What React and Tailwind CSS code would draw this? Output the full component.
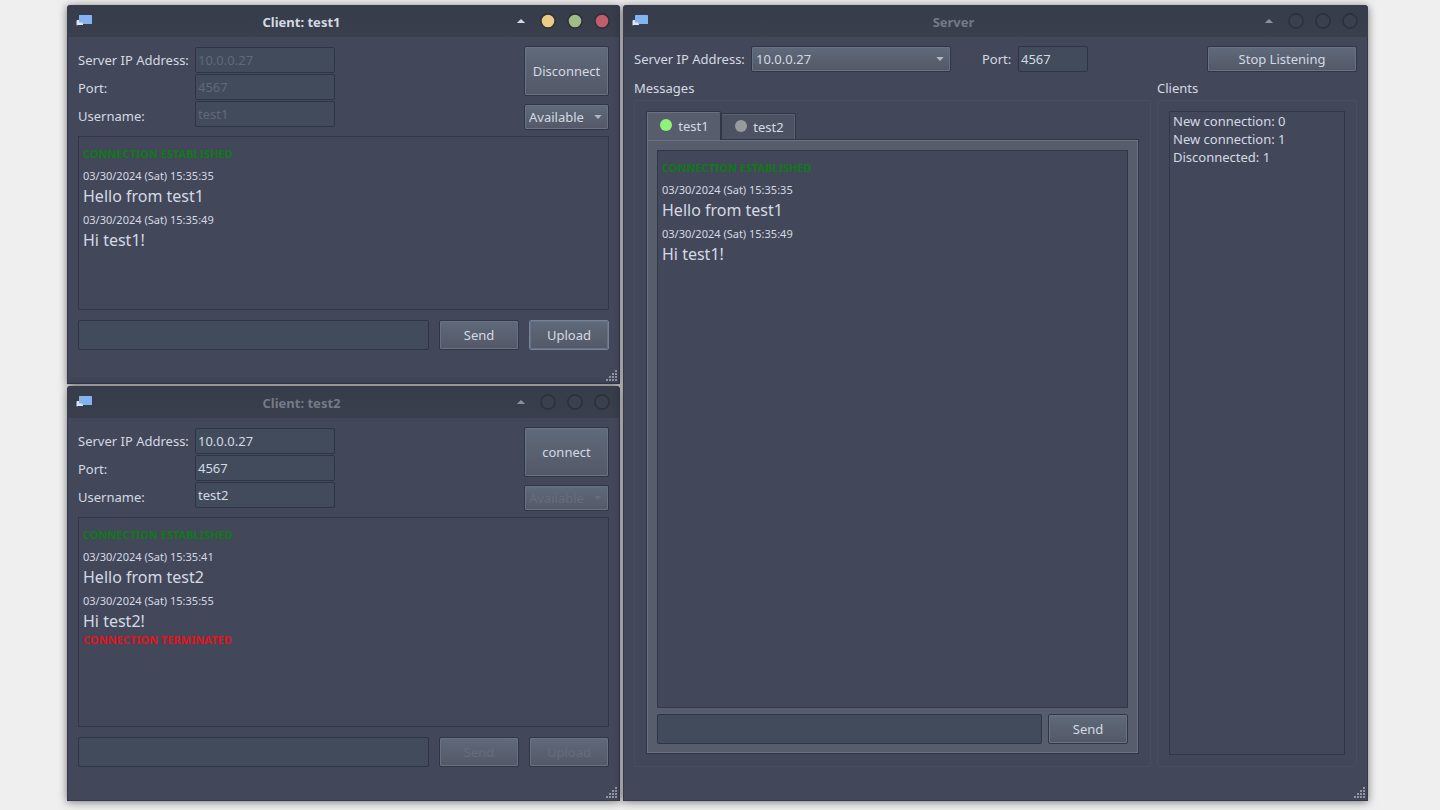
import React, { useId, useState } from "react";
import clsx from "clsx";

const FONT = "font-['Noto_Sans',sans-serif]";
const RAISED =
  "rounded-[2px] border border-[#2f3747] bg-linear-to-b from-[#606a7a] to-[#535868] leading-5 shadow-[inset_0_0_0_1px_#687283]";
const SUNKEN = "rounded-[2px] border border-[#2d3546] bg-[#424b5c]";
const VIEW = "border border-[#303749] bg-[#43475a]";

function AppIcon() {
  return (
    <svg className="h-4 w-4 shrink-0" viewBox="0 0 16 16" aria-hidden="true">
      <path d="M0.5 8 Q0.5 7 1.5 7 H7 V12 H2 L0.8 12.6 Q0.3 12.4 0.5 11 Z" fill="#dfe5ee" />
      <path d="M3 2.6 Q3 2 3.6 2 H15.3 Q16 2 16 2.6 V10.4 Q16 11 15.4 11 H6.5 V9.5 H3.6 Q3 9.5 3 8.9 Z" fill="#83b4f1" />
    </svg>
  );
}

function WindowDot({ label, color }) {
  return (
    <button type="button" aria-label={label} className="flex h-8 w-[27px] items-center justify-center">
      <svg className="h-[18px] w-[18px]" viewBox="0 0 18 18" aria-hidden="true">
        <circle cx="9" cy="9" r="7.1" fill={color || "#3a404c"} stroke={color ? "#2f2f3b" : "#2b313d"} strokeWidth="1.6" />
      </svg>
    </button>
  );
}

function TitleBar({ title, active }) {
  return (
    <header className="flex h-8 shrink-0 items-center rounded-t-[4px] bg-linear-to-b from-[#363c49] to-[#393f4c] pr-[5px] pl-[9px]">
      <AppIcon />
      <h1 className={clsx("flex-1 pt-[2px] pl-1 text-center text-[13px] leading-5 font-bold", active ? "text-[#d3dae3]" : "text-[#757a86]")}>
        {title}
      </h1>
      <button type="button" aria-label="Shade" className="flex h-8 w-[27px] items-center justify-center">
        <svg className="h-[10px] w-[10px]" viewBox="0 0 10 10" aria-hidden="true">
          <path d="M0.8 7 L5 3 L9.2 7 Z" fill={active ? "#d3dae3" : "#8b909b"} />
        </svg>
      </button>
      <WindowDot label="Minimize" color={active && "#e9cb84"} />
      <WindowDot label="Maximize" color={active && "#a0bd86"} />
      <WindowDot label="Close" color={active && "#c05f6a"} />
    </header>
  );
}

const GRIP = [[9, 0], [6, 3], [9, 3], [3, 6], [6, 6], [9, 6], [0, 9], [3, 9], [6, 9], [9, 9]];

function Window({ title, active, grow, children }) {
  return (
    <section
      className={clsx(
        "relative flex flex-col rounded-t-[4px] border-b border-[#333a49] bg-[#43475a] shadow-[0_1px_9px_rgba(0,0,0,0.5),inset_1px_0_0_#333a49,inset_-1px_0_0_#333a49]",
        grow && "flex-1"
      )}
    >
      <TitleBar title={title} active={active} />
      <div className="flex flex-1 flex-col px-[11px] pt-[9px] pb-[33px]">{children}</div>
      <svg className="absolute right-[2px] bottom-[1px] h-3 w-3" viewBox="0 0 12 12" aria-hidden="true">
        {GRIP.map(([x, y]) => (
          <rect key={`${x}-${y}`} x={x} y={y} width="2" height="2" fill="#8f95a2" />
        ))}
      </svg>
    </section>
  );
}

function PushButton({ className, focused, ...props }) {
  return (
    <button
      type="button"
      className={clsx(
        RAISED,
        "shrink-0 text-[13px] text-[#d3dae3] disabled:text-[#666c7c]",
        focused && "outline-1 -outline-offset-1 outline-[#72849a]",
        className
      )}
      {...props}
    />
  );
}

function Combo({ className, children, ...props }) {
  return (
    <div className={clsx("relative", className)}>
      <select
        className={clsx(RAISED, "peer h-[26px] w-full appearance-none pl-1 text-[13px] text-[#d3dae3] disabled:text-[#666c7c] disabled:opacity-100")}
        {...props}
      >
        {children}
      </select>
      <svg
        className="pointer-events-none absolute top-[10px] right-[7px] h-[6px] w-2 text-[#b4bac5] peer-disabled:text-[#666c7c]"
        viewBox="0 0 8 6"
        aria-hidden="true"
      >
        <path d="M0.3 1 H7.7 L4 5 Z" fill="currentColor" />
      </svg>
    </div>
  );
}

function History({ items, className, label }) {
  return (
    <div role="log" aria-label={label} className={clsx(VIEW, "px-1 pt-2", className)}>
      {items.map((item, i) => {
        if (item.status === "up")
          return <p key={i} className="text-[11px] leading-[18px] font-bold text-[#107a18]">{item.text}</p>;
        if (item.status === "down")
          return <p key={i} className="text-[11px] leading-4 font-bold text-[#e0141c]">{item.text}</p>;
        return (
          <div key={i} className="pt-1">
            <p className="text-[11px] leading-[18px] text-[#d3dae3]">{item.time}</p>
            <p className="text-[16px] leading-[22px] text-[#d3dae3]">{item.text}</p>
          </div>
        );
      })}
    </div>
  );
}

function Client({ name, connected, items, grow }) {
  const id = useId();
  const fields = [
    ["Server IP Address:", "10.0.0.27"],
    ["Port:", "4567"],
    ["Username:", name],
  ];
  return (
    <Window title={`Client: ${name}`} active={connected} grow={grow}>
      <div className="flex items-start">
        <div className="flex w-[117px] flex-col text-[13px]">
          {fields.map(([label], i) => (
            <label key={label} htmlFor={`${id}-${i}`} className="h-7 leading-7 whitespace-nowrap">
              {label}
            </label>
          ))}
        </div>
        <div className="flex w-[140px] flex-col gap-px pt-px">
          {fields.map(([label, value], i) => (
            <input
              key={label}
              id={`${id}-${i}`}
              defaultValue={value}
              disabled={connected}
              className={clsx(SUNKEN, "h-[26px] w-full px-[2px] text-[13px] text-[#d3dae3] disabled:text-[#616879]")}
            />
          ))}
        </div>
        <div className="ml-auto flex h-[84px] w-[85px] flex-col justify-between">
          <PushButton className="h-[50px] w-full">{connected ? "Disconnect" : "connect"}</PushButton>
          <Combo aria-label="Status" disabled={!connected}>
            <option>Available</option>
          </Combo>
        </div>
      </div>
      <History label="Conversation" items={items} className={clsx("mt-[6px]", grow ? "flex-1" : "h-[174px]")} />
      <div className="mt-[10px] flex gap-[10px]">
        <input aria-label="Message" disabled={!connected} className={clsx(SUNKEN, "h-[30px] min-w-0 flex-1 px-1 text-[13px] text-[#d3dae3]")} />
        <PushButton className="h-[30px] w-20" disabled={!connected}>Send</PushButton>
        <PushButton className="h-[30px] w-20" disabled={!connected} focused={connected}>Upload</PushButton>
      </div>
    </Window>
  );
}

const UP = { status: "up", text: "CONNECTION ESTABLISHED" };
const CHAT1 = [
  UP,
  { time: "03/30/2024 (Sat) 15:35:35", text: "Hello from test1" },
  { time: "03/30/2024 (Sat) 15:35:49", text: "Hi test1!" },
];
const CHAT2 = [
  UP,
  { time: "03/30/2024 (Sat) 15:35:41", text: "Hello from test2" },
  { time: "03/30/2024 (Sat) 15:35:55", text: "Hi test2!" },
  { status: "down", text: "CONNECTION TERMINATED" },
];
const CHATS = { test1: CHAT1, test2: CHAT2 };
const EVENTS = ["New connection: 0", "New connection: 1", "Disconnected: 1"];

function Server() {
  const [tab, setTab] = useState("test1");
  return (
    <Window title="Server" grow>
      <div className="flex h-[26px] items-center text-[13px] leading-5">
        <label htmlFor="server-ip" className="w-[117px] whitespace-nowrap">Server IP Address:</label>
        <Combo id="server-ip" className="w-[200px]">
          <option>10.0.0.27</option>
        </Combo>
        <label htmlFor="server-port" className="ml-[31px] w-9">Port:</label>
        <input id="server-port" defaultValue="4567" className={clsx(SUNKEN, "h-[26px] w-[70px] px-[2px] text-[#d3dae3]")} />
        <PushButton className="ml-auto h-[26px] w-[150px]">Stop Listening</PushButton>
      </div>
      <div className="mt-[6px] flex flex-1 gap-[6px]">
        <div className="flex flex-1 flex-col">
          <h2 className="h-[22px] text-[13px] leading-5">Messages</h2>
          <div className="flex flex-1 flex-col rounded-[2px] border border-[#484d60] px-[11px] pt-[10px] pb-3">
            <div role="tablist" className="relative z-10 -mb-px flex items-end">
              {["test1", "test2"].map((name) => {
                const selected = tab === name;
                return (
                  <button
                    key={name}
                    type="button"
                    role="tab"
                    aria-selected={selected}
                    onClick={() => setTab(name)}
                    className={clsx(
                      "flex w-[75px] items-center justify-center gap-[6px] rounded-t-[2px] border-x border-t border-[#2f3747] pl-[2px] text-[13px] leading-5 text-[#d3dae3]",
                      selected
                        ? "h-[29px] bg-[#585d6e] shadow-[inset_1px_1px_0_#6b7282]"
                        : "mb-px h-[26px] bg-[#4d5263] pt-px shadow-[inset_0_1px_0_#5c6273,inset_-1px_0_0_#5c6273]"
                    )}
                  >
                    <span className={clsx("mb-[2px] h-3 w-3 rounded-full", name === "test1" ? "bg-[#8ff27b]" : "bg-[#989b9c]")} />
                    {name}
                  </button>
                );
              })}
            </div>
            <div role="tabpanel" className="flex flex-1 flex-col border border-[#2f3747] bg-[#585d6e] px-[10px] pt-[10px] pb-[9px] shadow-[inset_0_0_0_1px_#6b7282]">
              <History label="Messages" items={CHATS[tab]} className="flex-1" />
              <div className="mt-[6px] flex gap-[6px]">
                <input aria-label="Message" className={clsx(SUNKEN, "h-[30px] min-w-0 flex-1 px-1 text-[13px] text-[#d3dae3]")} />
                <PushButton className="h-[30px] w-20">Send</PushButton>
              </div>
            </div>
          </div>
        </div>
        <div className="flex w-[200px] flex-col">
          <h2 className="h-[22px] text-[13px] leading-5">Clients</h2>
          <div className="flex flex-1 flex-col rounded-[2px] border border-[#484d60] px-[11px] pt-[10px] pb-[11px]">
            <ul className={clsx(VIEW, "flex-1 px-[3px] text-[13px] leading-[18px]")}>
              {EVENTS.map((event) => (
                <li key={event}>{event}</li>
              ))}
            </ul>
          </div>
        </div>
      </div>
    </Window>
  );
}

export default function App() {
  return (
    <main className={clsx(FONT, "grid min-h-screen grid-cols-[553fr_745fr] gap-[3px] bg-[#efefef] pt-[5px] pr-[72px] pb-[9px] pl-[67px] text-[#d3dae3]")}>
      <div className="flex flex-col gap-[2px]">
        <Client name="test1" connected items={CHAT1} />
        <Client name="test2" connected={false} items={CHAT2} grow />
      </div>
      <div className="flex flex-col">
        <Server />
      </div>
    </main>
  );
}
